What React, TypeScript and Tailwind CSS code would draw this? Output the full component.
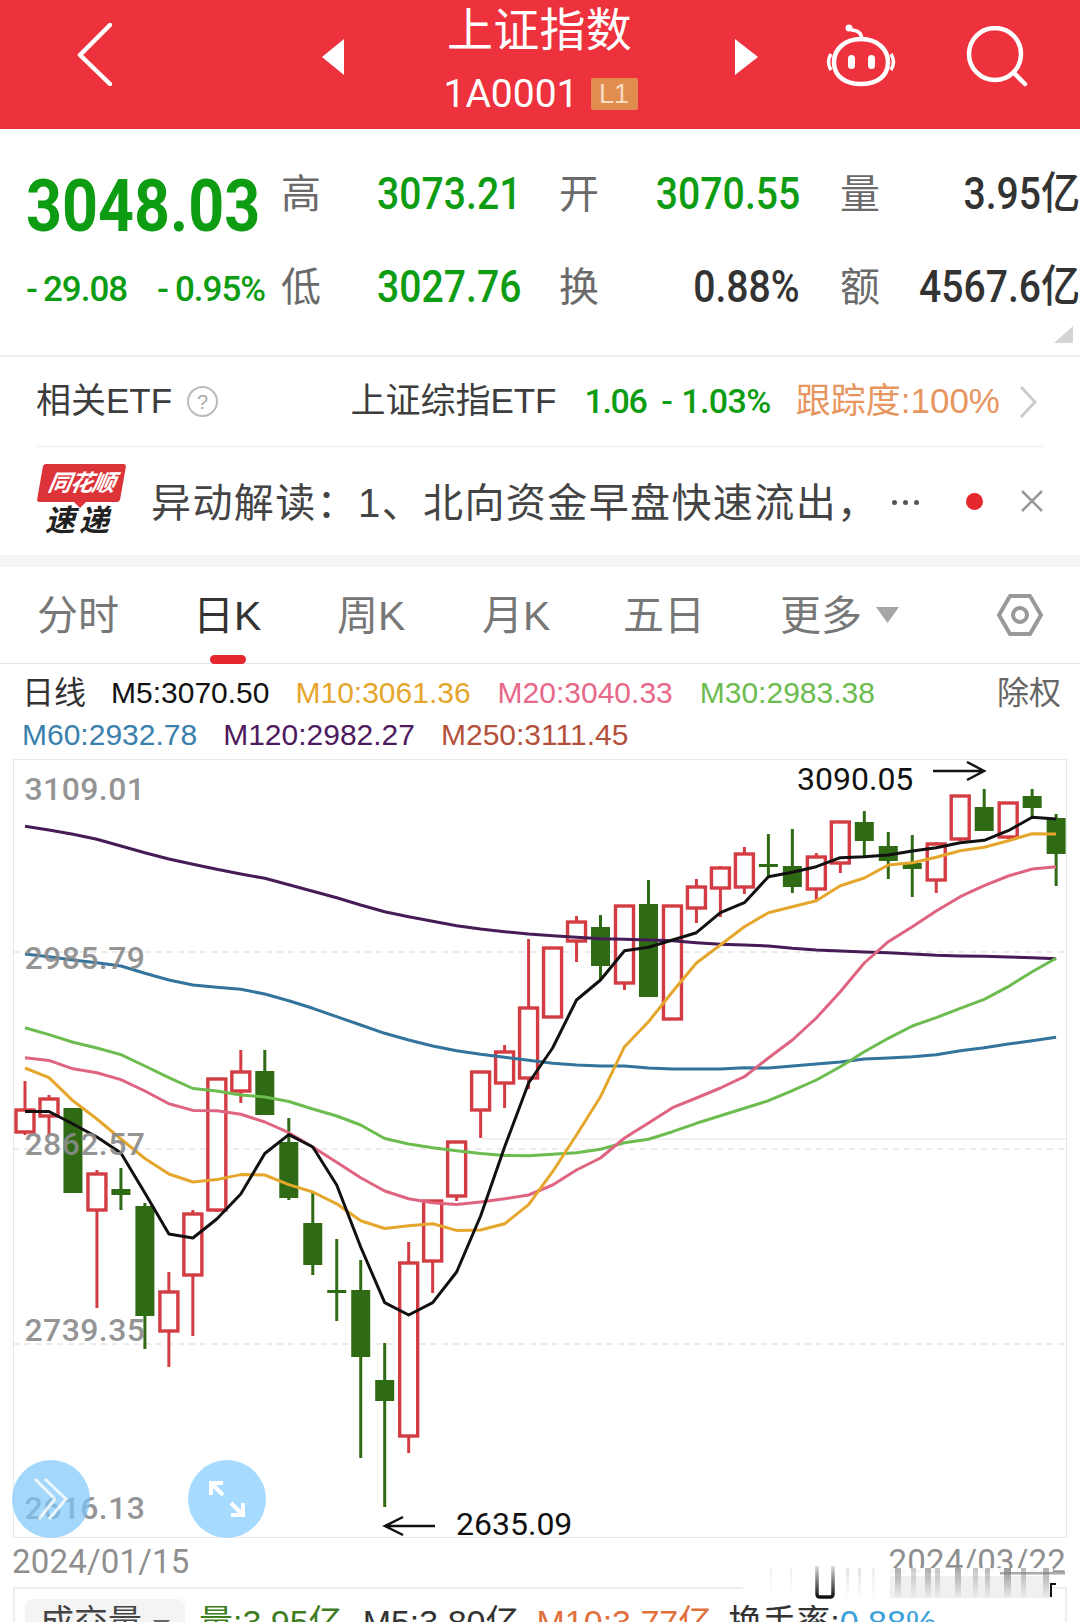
const RED = "#d43c43";
const GREEN = "#2f6a14";

// [high, bodyTop, bodyBottom, low, isRed] in page pixels
const candles: [number, number, number, number, boolean][] = [
  [1081, 1110, 1132, 1135, true],
  [1095, 1099, 1116, 1135, true],
  [1108, 1108, 1193, 1193, false],
  [1170, 1174, 1210, 1308, true],
  [1168, 1189, 1195, 1210, false],
  [1203, 1206, 1316, 1349, false],
  [1272, 1292, 1331, 1367, true],
  [1210, 1214, 1275, 1336, true],
  [1079, 1079, 1210, 1212, true],
  [1050, 1072, 1091, 1103, true],
  [1050, 1071, 1115, 1115, false],
  [1118, 1142, 1198, 1200, false],
  [1193, 1223, 1265, 1275, false],
  [1239, 1290, 1293, 1321, false],
  [1260, 1290, 1357, 1458, false],
  [1343, 1380, 1401, 1507, false],
  [1242, 1263, 1436, 1453, true],
  [1200, 1201, 1261, 1293, true],
  [1141, 1142, 1196, 1201, true],
  [1072, 1072, 1110, 1138, true],
  [1045, 1052, 1083, 1108, true],
  [939, 1008, 1078, 1089, true],
  [947, 948, 1017, 1018, true],
  [916, 922, 941, 962, true],
  [915, 927, 966, 980, false],
  [905, 906, 983, 990, true],
  [880, 904, 997, 997, false],
  [905, 906, 1019, 1019, true],
  [879, 887, 908, 923, true],
  [866, 868, 888, 917, true],
  [847, 854, 887, 894, true],
  [834, 864, 867, 877, false],
  [829, 866, 887, 893, false],
  [853, 857, 889, 902, true],
  [821, 822, 863, 873, true],
  [811, 822, 841, 858, false],
  [832, 846, 861, 879, false],
  [835, 863, 869, 897, false],
  [842, 844, 880, 893, true],
  [795, 796, 839, 841, true],
  [789, 807, 831, 831, false],
  [802, 803, 837, 839, true],
  [789, 796, 808, 817, false],
  [814, 818, 854, 886, false],
];

const m5 = [1111.5, 1111.5, 1124, 1137, 1153, 1193, 1234, 1238, 1219, 1194, 1153.5, 1134.6, 1147, 1185, 1247, 1302.7, 1315, 1302.7, 1272, 1216, 1147, 1083, 1048, 1000, 980, 950.7, 947.3, 940, 932.7, 912.7, 902.7, 876.7, 872.3, 866.7, 857.7, 856.7, 855, 851, 847.7, 842.7, 840.3, 830.7, 817.3, 819];
const m10 = [1068, 1077.7, 1100.8, 1119, 1139, 1158.5, 1174, 1182, 1179.6, 1174.6, 1175, 1184.6, 1192, 1203.8, 1220.8, 1228.5, 1225.8, 1223.8, 1230.4, 1230, 1223.8, 1204.6, 1171.7, 1135, 1096.7, 1046.7, 1021.7, 991.7, 963, 945, 926.7, 912.7, 906.7, 900.7, 885.7, 878, 865, 862.7, 857.3, 850.7, 847.3, 840.7, 833.7, 834];
const m20 = [1057.7, 1060.4, 1068.8, 1072.7, 1079.6, 1091, 1103.8, 1110.4, 1110.8, 1114.2, 1122, 1132.7, 1147, 1162.3, 1177.7, 1191, 1198.8, 1202.7, 1204.6, 1202, 1198.8, 1195, 1185, 1170, 1158, 1138, 1123, 1107.7, 1098, 1088, 1076.7, 1058, 1040, 1018, 991.7, 963, 941.7, 926.7, 911, 896.7, 885.7, 876, 869, 866.7];
const m30 = [1027.7, 1034.6, 1042.3, 1048, 1054.6, 1066, 1077.7, 1088.5, 1091, 1095, 1097, 1101.5, 1109, 1116, 1125, 1138.5, 1144, 1147.7, 1150.8, 1153.5, 1155.4, 1155.8, 1154.3, 1152.7, 1149.3, 1142.7, 1139.3, 1131.7, 1123.3, 1115.7, 1108.3, 1100.7, 1090.7, 1080, 1066.7, 1051.7, 1038.3, 1026, 1017.7, 1008.3, 999.3, 986.7, 971.7, 958.3];
const m60 = [954, 956.7, 960, 962.7, 966, 973.3, 980, 985, 987.3, 989.3, 994, 1000.7, 1008.3, 1016.7, 1025, 1033.3, 1040, 1046, 1050.7, 1054.3, 1057.3, 1060.3, 1063.3, 1065, 1066, 1066, 1068, 1069, 1069, 1069, 1067.7, 1068, 1066, 1064, 1062, 1059, 1058, 1056.7, 1054.7, 1050.7, 1047.7, 1044, 1040.7, 1037.3];
const m120 = [826.3, 830, 834.3, 839.3, 846, 852.7, 859, 864.3, 869.3, 874, 878.3, 884.7, 891.3, 897.7, 905, 911.7, 916.7, 921.3, 925.7, 929, 931.7, 934, 935.7, 937.3, 938.7, 939.3, 940, 940.7, 942.7, 944.3, 945, 946, 948.3, 950, 951, 952, 952.7, 954, 955.3, 956, 956.3, 957, 957.7, 958.7];

const xAt = (i: number) => 25 + i * 23.98;
const toPoints = (ys: number[]) => ys.map((y, i) => `${xAt(i).toFixed(1)},${y}`).join(" ");

const lines: [number[], string][] = [
  [m120, "#461c56"],
  [m60, "#33749c"],
  [m30, "#6cbc4f"],
  [m20, "#df6480"],
  [m10, "#e5a62c"],
  [m5, "#111111"],
];

const axisLabels: [string, number][] = [
  ["3109.01", 800],
  ["2985.79", 969],
  ["2862.57", 1155],
  ["2739.35", 1341],
  ["2616.13", 1519],
];

function Chart() {
  return (
    <svg viewBox="13 759 1054 779" className="absolute left-[-1px] top-[-1px] w-[1054px] h-[779px]">
      <line x1="13" x2="1067" y1="952" y2="952" stroke="#e6e6e6" strokeWidth="1.5" strokeDasharray="6 5" />
      <line x1="13" x2="1067" y1="1149" y2="1149" stroke="#e6e6e6" strokeWidth="1.5" strokeDasharray="6 5" />
      <line x1="13" x2="1067" y1="1344" y2="1344" stroke="#e6e6e6" strokeWidth="1.5" strokeDasharray="6 5" />
      <line x1="482" x2="1067" y1="1139" y2="1139" stroke="#e4e4e4" strokeWidth="1" />
      {candles.map(([high, top, bottom, low, isRed], i) => {
        const x = xAt(i);
        const color = isRed ? RED : GREEN;
        return (
          <g key={i}>
            <line x1={x} x2={x} y1={high} y2={top} stroke={color} strokeWidth="3" />
            <line x1={x} x2={x} y1={bottom} y2={low} stroke={color} strokeWidth="3" />
            {isRed ? (
              <rect x={x - 9} y={top} width="18" height={bottom - top} fill="#fff" stroke={color} strokeWidth="3.4" />
            ) : (
              <rect x={x - 9.5} y={top} width="19" height={bottom - top} fill={color} />
            )}
          </g>
        );
      })}
      {lines.map(([ys, color], i) => (
        <polyline key={i} points={toPoints(ys)} fill="none" stroke={color} strokeWidth="3" strokeLinejoin="round" />
      ))}
      {axisLabels.map(([label, y]) => (
        <text key={label} x="24.5" y={y} fill="#8a8a8a" fillOpacity="0.92" fontSize="32" fontWeight="500" fontFamily="Roboto, sans-serif" letterSpacing="0.4">
          {label}
        </text>
      ))}
      <text x="797" y="790" fill="#111" fontSize="32" fontFamily="Roboto, sans-serif">3090.05</text>
      <path d="M933 771H983M967 762L984 771L967 780" fill="none" stroke="#111" strokeWidth="2.5" />
      <text x="456" y="1535" fill="#111" fontSize="32" fontFamily="Roboto, sans-serif">2635.09</text>
      <path d="M435 1526H385M403 1517L385 1526L403 1535" fill="none" stroke="#111" strokeWidth="2.5" />
    </svg>
  );
}

// stretched watermark remnant across the bottom right corner
function Smear() {
  const greys: [number, number, number][] = [
    [895, 6, 0.7], [911, 5, 0.45], [925, 6, 0.7], [935, 5, 0.5], [955, 6, 0.75], [973, 5, 0.5], [985, 5, 0.6], [1004, 7, 0.9], [1021, 5, 0.6], [1043, 6, 0.7],
    [770, 2, 0.12], [790, 2, 0.14], [846, 3, 0.22], [858, 3, 0.25], [872, 3, 0.16],
  ];
  return (
    <svg viewBox="743 1560 337 40" className="absolute left-[743px] top-[1560px] w-[337px] h-[40px]">
      <defs>
        <linearGradient id="fadeDown" x1="0" x2="0" y1="0" y2="1">
          <stop offset="0" stopColor="#777" stopOpacity="0.85" />
          <stop offset="1" stopColor="#777" stopOpacity="0.05" />
        </linearGradient>
        <linearGradient id="darkDown" x1="0" x2="0" y1="0" y2="1">
          <stop offset="0" stopColor="#111" stopOpacity="0.15" />
          <stop offset="1" stopColor="#111" stopOpacity="1" />
        </linearGradient>
      </defs>
      <rect x="743" y="1568" width="310" height="30" fill="#fff" fillOpacity="0.92" />
      <rect x="1000" y="1572" width="65" height="2.5" fill="#aaa" />
      <rect x="890" y="1576" width="160" height="22" fill="#ccc" fillOpacity="0.3" />
      {greys.map(([x, w, o]) => (
        <rect key={x} x={x} y="1568" width={w} height="30" fill="url(#fadeDown)" opacity={o} />
      ))}
      <path d="M817 1566V1594Q817 1597 820 1597H830Q833 1597 833 1594V1566" fill="none" stroke="url(#darkDown)" strokeWidth="3.5" />
      <path d="M1051 1597V1584H1056" fill="none" stroke="#111" strokeWidth="2" />
    </svg>
  );
}

const quoteValue = "inline-block font-['Roboto','Noto_Sans_CJK_SC',sans-serif] font-medium text-[44px] scale-x-[0.89]";

function QuoteLeft({ label, value }: { label: string; value: string }) {
  return (
    <div className="flex items-center h-full">
      <span className="w-[96px] text-[40px] text-[#6a6a6a]">{label}</span>
      <span className={`${quoteValue} origin-left text-[#0d9c12]`}>{value}</span>
    </div>
  );
}

function Quote({ label, value, color }: { label: string; value: string; color: string }) {
  return (
    <div className="flex items-center justify-between h-full">
      <span className="text-[40px] text-[#6a6a6a]">{label}</span>
      <span className={`${quoteValue} origin-right ${color}`}>{value}</span>
    </div>
  );
}

export default function App() {
  return (
    <div className="relative w-[1080px] h-[1622px] overflow-hidden bg-white font-['Liberation_Sans','Noto_Sans_CJK_SC',sans-serif]">
      {/* header */}
      <div className="h-[129px] bg-[#ee323d] flex items-start text-white pl-[77px]">
        <svg width="35" height="63" viewBox="0 0 35 63" fill="none" stroke="#fff" strokeWidth="4.5" strokeLinecap="round" strokeLinejoin="round" className="mt-[23px]">
          <path d="M33 2L3 32L33 61" />
        </svg>
        <svg width="22" height="36" viewBox="0 0 22 36" className="ml-[210px] mt-[39px]">
          <path d="M22 0V36L0 18Z" fill="#fff" />
        </svg>
        <div className="w-[391px] flex flex-col items-center pt-[4px]">
          <div className="text-[46px] leading-[52px] tracking-[0.2px]">上证指数</div>
          <div className="flex items-center gap-[12px] mt-[21px] ml-[2px]">
            <span className="font-['Roboto',sans-serif] text-[39px] leading-[34px]">1A0001</span>
            <span className="w-[47px] h-[32px] bg-[#e08d4d] rounded-[2px] flex items-center justify-center text-[27px] text-[#f6dcc3]">L1</span>
          </div>
        </div>
        <svg width="23" height="36" viewBox="0 0 23 36" className="mt-[39px]">
          <path d="M0 0V36L23 18Z" fill="#fff" />
        </svg>
        <svg width="70" height="63" viewBox="0 0 70 63" fill="none" stroke="#fff" strokeWidth="4.5" className="ml-[68px] mr-[70px] mt-[24px]">
          <circle cx="23" cy="4" r="3.5" fill="#fff" stroke="none" />
          <path d="M25 6Q35 6 36 15" strokeWidth="3.5" />
          <path d="M35 15C52 15 62 26 62 38C62 53 50 60 35 60C20 60 8 53 8 38C8 26 18 15 35 15Z" />
          <path d="M5 30Q0 38 5 46M65 30Q70 38 65 46" strokeWidth="3.5" />
          <rect x="22" y="31" width="7" height="14" rx="3.5" fill="#fff" stroke="none" />
          <rect x="42" y="31" width="7" height="14" rx="3.5" fill="#fff" stroke="none" />
        </svg>
        <svg width="62" height="62" viewBox="0 0 62 62" fill="none" stroke="#fff" strokeWidth="4.5" strokeLinecap="round" className="mt-[26px]">
          <circle cx="29" cy="28" r="26" />
          <path d="M48 47L59 58" />
        </svg>
      </div>

      {/* quote block */}
      <div className="relative h-[228px] border-b-2 border-[#eeeeee] pt-[18px] pl-[26px] grid grid-cols-[255px_278px_241px_40px_240px] grid-rows-[93px_93px]">
        <div className="flex items-center pt-[26px]">
          <span className="inline-block origin-left scale-x-[0.86] font-['Roboto',sans-serif] font-bold text-[73px] text-[#0d9c12]">3048.03</span>
        </div>
        <QuoteLeft label="高" value="3073.21" />
        <Quote label="开" value="3070.55" color="text-[#0d9c12]" />
        <div />
        <Quote label="量" value="3.95亿" color="text-[#333333]" />

        <div className="flex items-center pt-[8px] font-['Roboto',sans-serif] font-medium text-[35px] tracking-[-1px] text-[#0d9c12]">
          <span className="w-[131px]"><span className="mr-[6px]">-</span>29.08</span>
          <span><span className="mr-[7px]">-</span>0.95%</span>
        </div>
        <QuoteLeft label="低" value="3027.76" />
        <Quote label="换" value="0.88%" color="text-[#333333]" />
        <div />
        <Quote label="额" value="4567.6亿" color="text-[#333333]" />
        <svg width="19" height="17" viewBox="0 0 19 17" className="absolute right-[7px] bottom-[12px]">
          <path d="M19 0V17H0Z" fill="#d4d4d4" />
        </svg>
      </div>

      {/* related etf */}
      <div className="mx-[36px] h-[90px] border-b border-[#eeeeee] flex items-center text-[35px] text-[#3d3d3d]">
        <span>相关ETF</span>
        <span className="ml-[15px] w-[31px] h-[31px] rounded-full border-2 border-[#bbbbbb] flex items-center justify-center text-[20px] text-[#aaaaaa]">?</span>
        <span className="ml-auto">上证综指ETF</span>
        <span className="ml-[28px] font-['Roboto',sans-serif] font-medium text-[34px] tracking-[-1.4px] text-[#0d9c12]">1.06</span>
        <span className="ml-[15px] font-['Roboto',sans-serif] font-medium text-[34px] tracking-[-0.6px] text-[#0d9c12]"><span className="mr-[9px]">-</span>1.03%</span>
        <span className="ml-[25px] text-[#e8965f]">跟踪度:100%</span>
        <svg width="18" height="32" viewBox="0 0 18 32" fill="none" stroke="#cccccc" strokeWidth="3" className="ml-[19px] mr-[7px]">
          <path d="M2 1L16 16L2 31" />
        </svg>
      </div>

      {/* news ticker */}
      <div className="h-[108px] flex items-center pl-[38px] pr-[37px]">
        <div className="relative w-[87px] h-[74px] shrink-0 mt-[-1px]">
          <div className="absolute left-[2px] top-0 w-[83px] h-[38px] bg-[#dc3339] rounded-[3px] -skew-x-[10deg] flex items-center justify-center text-[23px] font-bold italic text-white tracking-[-1px]">
            同花顺
          </div>
          <div className="absolute left-[36px] top-[38px] w-0 h-0 border-x-[6px] border-x-transparent border-t-[6px] border-t-[#dc3339]" />
          <div className="absolute left-[7px] top-[41px] text-[30px] leading-[32px] font-bold italic text-[#222222] tracking-[4px]">速递</div>
        </div>
        <div className="ml-[26px] mt-[3px] text-[40px] tracking-[1.4px] text-[#444444] whitespace-nowrap">异动解读：1、北向资金早盘快速流出，</div>
        <div className="ml-[14px] flex gap-[6px] mt-[2px]">
          <span className="w-[5px] h-[5px] rounded-full bg-[#555555]" />
          <span className="w-[5px] h-[5px] rounded-full bg-[#555555]" />
          <span className="w-[5px] h-[5px] rounded-full bg-[#555555]" />
        </div>
        <span className="ml-auto w-[17px] h-[17px] rounded-full bg-[#e5282e]" />
        <svg width="22" height="22" viewBox="0 0 22 22" fill="none" stroke="#999999" strokeWidth="2.5" className="ml-[38px]">
          <path d="M1 1L21 21M21 1L1 21" />
        </svg>
      </div>

      <div className="h-[12px] bg-[#f5f5f5]" />

      {/* period tabs */}
      <div className="relative h-[97px] border-b border-[#e4e4e4] flex items-center pl-[37px] pt-[3px] text-[41px] text-[#777777]">
        <span className="w-[156px]">分时</span>
        <span className="w-[144px] text-[#333333]">日K</span>
        <span className="w-[145px]">周K</span>
        <span className="w-[141px]">月K</span>
        <span className="w-[157px]">五日</span>
        <span>更多</span>
        <svg width="23" height="16" viewBox="0 0 23 16" className="ml-[14px] mb-[4px]">
          <path d="M0 0H23L11.5 16Z" fill="#a6a6a6" />
        </svg>
        <svg width="46" height="44" viewBox="0 0 46 44" fill="none" stroke="#999999" strokeWidth="4" strokeLinejoin="round" className="ml-auto mr-[37px] mb-[3px]">
          <path d="M13 3H33L44 22L33 41H13L2 22Z" />
          <circle cx="23" cy="22" r="7" />
        </svg>
        <div className="absolute left-[210px] bottom-[-1px] w-[36px] h-[9px] bg-[#e5282e] rounded-[5px]" />
      </div>

      {/* moving average legend */}
      <div className="h-[95px] pl-[22px] pr-[19px] pt-[8px] text-[30px] leading-[42px] whitespace-nowrap">
        <div className="flex">
          <span className="text-[32px] text-[#333333]">日线</span>
          <span className="ml-[25px] text-[#111111]">M5:3070.50</span>
          <span className="ml-[26px] text-[#e5a62c]">M10:3061.36</span>
          <span className="ml-[27px] text-[#e8688a]">M20:3040.33</span>
          <span className="ml-[27px] text-[#6cbc4f]">M30:2983.38</span>
          <span className="ml-auto text-[32px] text-[#666666]">除权</span>
        </div>
        <div className="flex">
          <span className="text-[#3a80ac]">M60:2932.78</span>
          <span className="ml-[26px] text-[#4f1b60]">M120:2982.27</span>
          <span className="ml-[26px] text-[#b4513c]">M250:3111.45</span>
        </div>
      </div>

      {/* k line chart */}
      <div className="relative mx-[13px] h-[779px] border border-[#e8e8e8]">
        <Chart />
        <div className="absolute left-[-2px] bottom-[-1px] w-[78px] h-[78px] rounded-full bg-[#7cc6fa]/70 flex items-center justify-center">
          <svg width="36" height="44" viewBox="0 0 36 44" fill="none" stroke="#ffffff" strokeOpacity="0.8" strokeWidth="3">
            <path d="M2 2L22 22L6 42M12 2L33 22L16 42" />
          </svg>
        </div>
        <div className="absolute left-[174px] bottom-[-1px] w-[78px] h-[78px] rounded-full bg-[#a6daff] flex items-center justify-center">
          <svg width="38" height="38" viewBox="0 0 38 38" fill="none" stroke="#ffffff" strokeWidth="4">
            <path d="M3 3L15 15M23 23L35 35M3 15V3H15M23 35H35V23" />
          </svg>
        </div>
      </div>

      {/* dates */}
      <div className="h-[49px] pl-[12px] pr-[14px] pt-[6px] flex justify-between text-[33px] leading-[36px] tracking-[0.2px] text-[#8f8f8f] font-['Roboto',sans-serif]">
        <span>2024/01/15</span>
        <span>2024/03/22</span>
      </div>

      {/* volume panel */}
      <div className="mx-[13px] h-[40px] border-t-2 border-l-2 border-r-2 border-[#eeeeee] flex pl-[10px] pt-[10px] text-[34px] leading-[40px] whitespace-nowrap">
        <div className="w-[160px] h-[40px] bg-[#f4f4f4] rounded-[8px] flex items-start pl-[15px] pt-[3px] text-[#444444]">
          成交量
          <svg width="17" height="10" viewBox="0 0 17 10" className="ml-[11px] mt-[18px]">
            <path d="M0 0H17L8.5 10Z" fill="#666666" />
          </svg>
        </div>
        <div className="flex pt-[3px]">
          <span className="ml-[14px] text-[#3e7c1e]">量:3.95亿</span>
          <span className="ml-[20px] text-[#333333]">M5:3.80亿</span>
          <span className="ml-[17px] text-[#e0703c]">M10:3.77亿</span>
          <span className="ml-[16px] text-[#333333]">换手率:<span className="text-[#3aa0d8]">0.88%</span></span>
        </div>
      </div>

      <Smear />
    </div>
  );
}
